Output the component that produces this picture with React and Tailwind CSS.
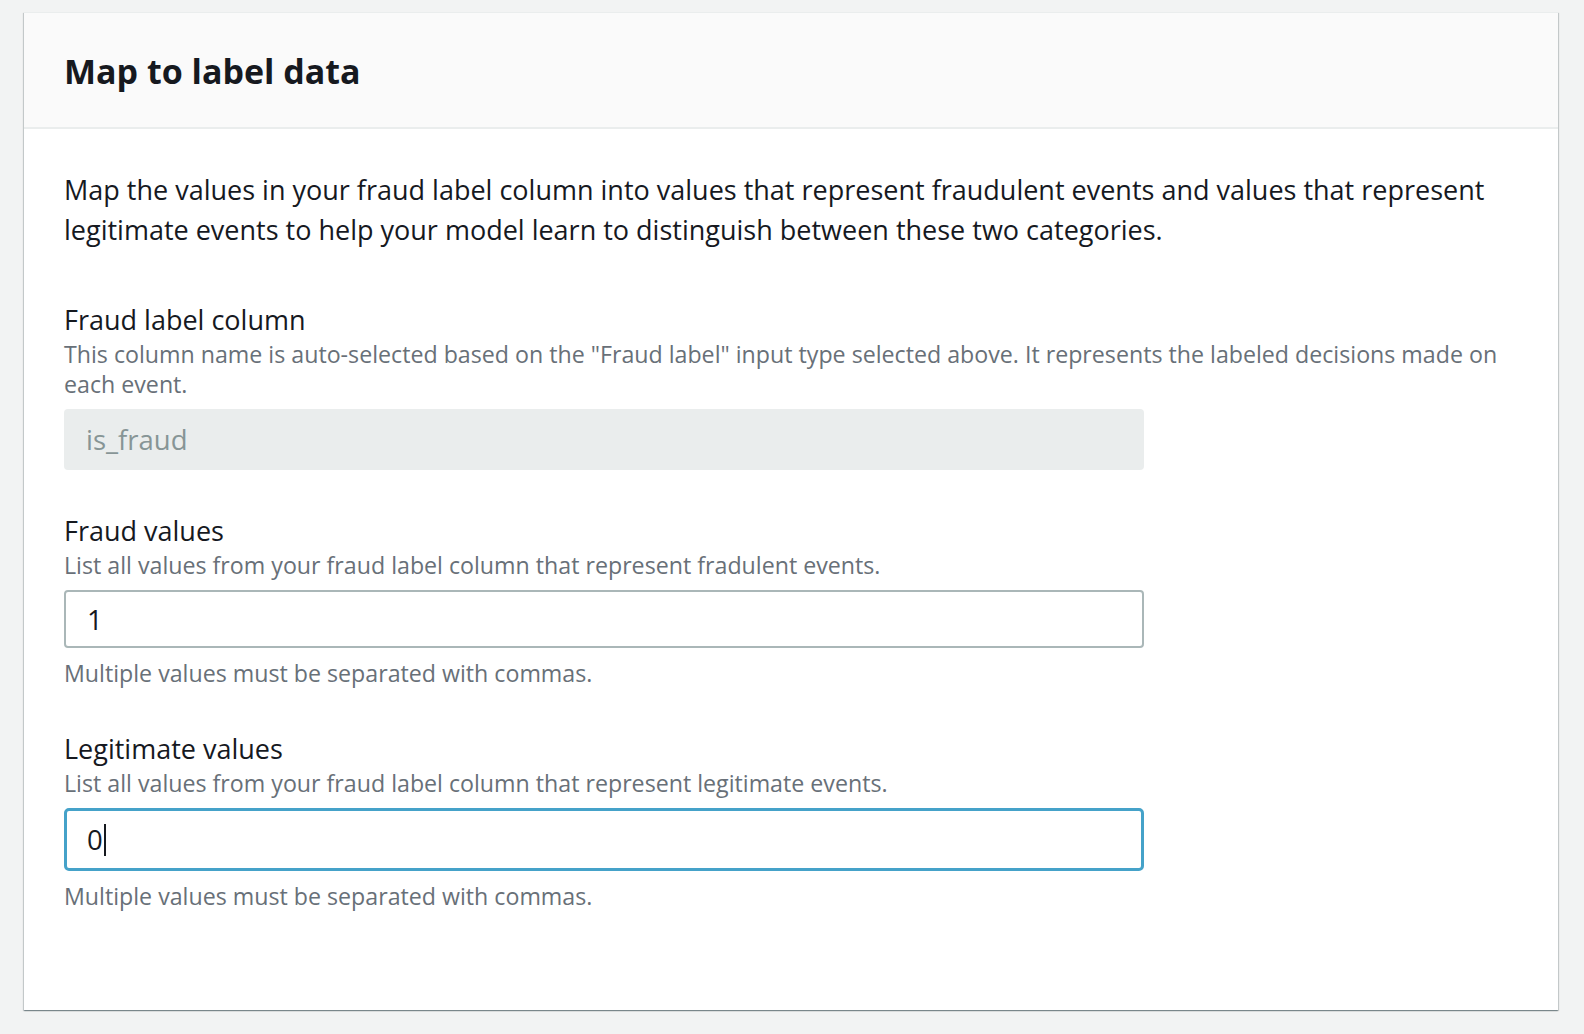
import { useState } from "react";

function Field({ label, description, children, hint }) {
  return (
    <div>
      <div className="text-[27px] leading-[34px] text-[#16191f]">{label}</div>
      <div className="mt-[2px] text-[23.2px] leading-[30px] text-[#687078]">
        {description}
      </div>
      <div className="mt-[10px] w-[1080px]">{children}</div>
      {hint && (
        <div className="mt-[10px] text-[23.2px] leading-[30px] text-[#687078]">
          {hint}
        </div>
      )}
    </div>
  );
}

function App() {
  const [fraudValues, setFraudValues] = useState("1");
  const legitValues = "0";

  return (
    <div
      className="min-h-screen bg-[#f2f3f3] pt-3 pl-6"
      style={{ fontFamily: '"Open Sans", "Noto Sans", sans-serif' }}
    >
      <div className="w-[1534px] h-[998px] bg-white shadow-[0_1px_1px_0_rgba(0,28,36,0.3),1px_1px_1px_0_rgba(0,28,36,0.15),-1px_1px_1px_0_rgba(0,28,36,0.15)] border-t border-[#eaeded]">
        <div className="h-[116px] bg-[#fafafa] border-b-2 border-[#eaeded] px-[40px] pt-[2px] flex items-center">
          <h2 className="text-[34px] font-bold text-[#16191f]">
            Map to label data
          </h2>
        </div>

        <div className="px-[40px] pt-[41px]">
          <p className="text-[27px] leading-[40px] text-[#16191f]">
            Map the values in your fraud label column into values that
            represent fraudulent events and values that represent legitimate
            events to help your model learn to distinguish between these two
            categories.
          </p>

          <div className="mt-[53px] flex flex-col gap-[44px]">
            <Field
              label="Fraud label column"
              description={
                'This column name is auto-selected based on the "Fraud label" input type selected above. It represents the labeled decisions made on each event.'
              }
            >
              <div className="h-[61px] rounded-[4px] bg-[#eaeded] px-[22px] flex items-center text-[27.5px] text-[#879596]">
                is_fraud
              </div>
            </Field>

            <Field
              label="Fraud values"
              description="List all values from your fraud label column that represent fradulent events."
              hint="Multiple values must be separated with commas."
            >
              <input
                className="w-full h-[58px] rounded-[4px] border-2 border-[#aab7b8] px-[21px] text-[27.5px] text-[#16191f] outline-none"
                value={fraudValues}
                onChange={(e) => setFraudValues(e.target.value)}
              />
            </Field>

            <Field
              label="Legitimate values"
              description="List all values from your fraud label column that represent legitimate events."
              hint="Multiple values must be separated with commas."
            >
              <div className="h-[63px] rounded-[5px] border-[3px] border-[#45a2c9] px-[20px] flex items-center text-[27.5px] text-[#16191f]">
                <span>{legitValues}</span>
                <span className="ml-[1px] w-[2px] h-[32px] bg-[#16191f]" />
              </div>
            </Field>
          </div>
        </div>
      </div>
    </div>
  );
}

export default App;
